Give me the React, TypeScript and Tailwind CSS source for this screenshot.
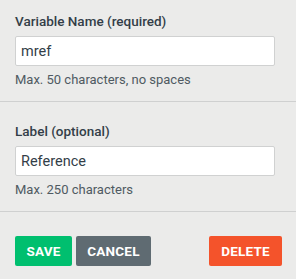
import React from "react";

export default function App() {
  const font = { fontFamily: 'Roboto, "Noto Sans", sans-serif' };
  return (
    <div className="w-[296px] h-[279px] bg-[#ebebea] text-[#333e48] overflow-hidden" style={font}>
      <div className="pl-[15px] pt-[11px] pb-[13px] border-b border-[#cfd0d0]">
        <div className="text-[13.5px] font-medium leading-[20px]">Variable Name (required)</div>
        <input
          readOnly
          value="mref"
          className="mt-[5px] block w-[260px] h-[30px] bg-white border border-[#d0d1d1] rounded-[2px] px-[5px] text-[14.5px] text-[#333e48] outline-none"
        />
        <div className="mt-[6px] text-[13px] leading-[16px] text-[#4f5a62]">Max. 50 characters, no spaces</div>
      </div>
      <div className="pl-[15px] pt-[19px] pb-[13px] border-b border-[#cfd0d0]">
        <div className="text-[13.5px] font-medium leading-[20px]">Label (optional)</div>
        <input
          readOnly
          value="Reference"
          className="mt-[5px] block w-[260px] h-[30px] bg-white border border-[#d0d1d1] rounded-[2px] px-[5px] text-[14.5px] text-[#333e48] outline-none"
        />
        <div className="mt-[6px] text-[13px] leading-[16px] text-[#4f5a62]">Max. 250 characters</div>
      </div>
      <div className="pl-[15px] pr-[14px] pt-[24px] flex items-center">
        <button className="h-[30px] w-[57px] rounded-[2px] bg-[#00bf6f] text-white text-[13.5px] font-bold tracking-[0.2px]">SAVE</button>
        <button className="ml-[4px] h-[30px] w-[75px] rounded-[2px] bg-[#5f6b72] text-white text-[13.5px] font-bold tracking-[0.2px]">CANCEL</button>
        <button className="ml-auto h-[30px] w-[73px] rounded-[2px] bg-[#f4532b] text-white text-[13.5px] font-bold tracking-[0.2px]">DELETE</button>
      </div>
    </div>
  );
}
